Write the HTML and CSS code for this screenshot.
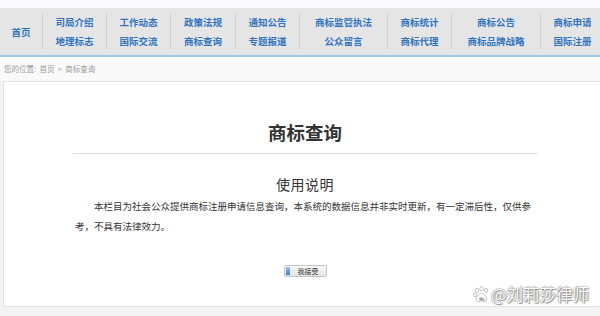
FILE: index.html
```html
<!DOCTYPE html>
<html lang="zh-CN">
<head>
    <meta charset="UTF-8">
    <title>商标查询</title>
    <link rel="stylesheet" href="styles.css">
</head>
<body>
    <div class="top-strip"></div>
    <nav class="nav">
        <div class="nav-col home"><a>首页</a></div>
        <div class="nav-col w64"><a>司局介绍</a><a>地理标志</a></div>
        <div class="nav-col w64"><a>工作动态</a><a>国际交流</a></div>
        <div class="nav-col w65"><a>政策法规</a><a>商标查询</a></div>
        <div class="nav-col w64"><a>通知公告</a><a>专题报道</a></div>
        <div class="nav-col w88"><a>商标监管执法</a><a>公众留言</a></div>
        <div class="nav-col w64"><a>商标统计</a><a>商标代理</a></div>
        <div class="nav-col w89"><a>商标公告</a><a>商标品牌战略</a></div>
        <div class="nav-col w64 last"><a>商标申请</a><a>国际注册</a></div>
    </nav>

    <div class="crumb">您的位置:&nbsp; 首页 &nbsp;&gt;&nbsp; 商标查询</div>

    <div class="main">
        <h1 class="title">商标查询</h1>
        <hr class="rule">
        <h2 class="subtitle">使用说明</h2>
        <p class="notice">本栏目为社会公众提供商标注册申请信息查询，本系统的数据信息并非实时更新，有一定滞后性，仅供参考，不具有法律效力。</p>
        <div class="actions">
            <button class="accept">我接受</button>
        </div>
    </div>

    <!-- watermark over the bottom right corner -->
    <div class="watermark">
        <svg width="17" height="17" viewBox="0 0 17 17">
            <g fill="#fff" stroke="#bbb" stroke-width="0.9">
                <ellipse cx="4" cy="4.5" rx="1.7" ry="2.1"/>
                <ellipse cx="8.5" cy="2.8" rx="1.7" ry="2.1"/>
                <ellipse cx="13" cy="4.5" rx="1.7" ry="2.1"/>
                <ellipse cx="2.3" cy="9" rx="1.6" ry="1.9"/>
                <path d="M8.5 7.2c-2.4 0-5.2 3.6-5.2 6.1 0 1.8 1.6 2.5 2.8 2.3 1-.2 1.6-.6 2.4-.6s1.4.4 2.4.6c1.2.2 2.8-.5 2.8-2.3 0-2.5-2.8-6.1-5.2-6.1z"/>
            </g>
            <text x="8.5" y="14.4" font-size="4.2" text-anchor="middle" fill="#aaa" font-family="Liberation Sans, sans-serif">du</text>
        </svg>
        <span>@刘莉莎律师</span>
    </div>
</body>
</html>
```

FILE: styles.css
```css
body {
    margin: 0;
    width: 600px;
    height: 316px;
    overflow: hidden;
    position: relative;
    background: #f3f3f4;
    font-family: "Noto Sans CJK SC", "Liberation Sans", sans-serif;
    color: #333;
}
.top-strip {
    height: 8px;
    background: #fbfbfd;
}
.nav {
    display: flex;
    height: 47px;
    background: #e5e5e6;
    border-bottom: 2px solid #a3c8e6;
    overflow: hidden;
    white-space: nowrap;
}
.nav-col {
    flex: none;
    display: flex;
    flex-direction: column;
    justify-content: center;
    align-items: center;
    gap: 6px;
    margin: 6px 0;
    border-right: 1px solid #cfcfd1;
    font-size: 9.5px;
    font-weight: 700;
    line-height: 13px;
    color: #2f74c0;
}
.nav-col.last {
    border-right: none;
}
.home { width: 42px; padding-top: 2px; }
.w64 { width: 63px; }
.w65 { width: 64px; }
.w88 { width: 87px; }
.w89 { width: 88px; }

.crumb {
    height: 24px;
    line-height: 24px;
    padding-left: 4px;
    font-size: 7.5px;
    color: #9a9a9a;
    background: #f9f9fa;
}
.main {
    margin-left: 3px;
    width: 602px;
    height: 224px;
    background: #fff;
    border: 1px solid #dde3ea;
    padding-top: 0;
    box-sizing: content-box;
}
.title {
    margin: 39px 0 0;
    text-align: center;
    font-size: 18.5px;
    line-height: 22px;
    font-weight: 700;
    color: #333;
}
.rule {
    width: 464px;
    margin: 10px auto 0;
    border: none;
    border-top: 1px solid #dedede;
}
.subtitle {
    margin: 21px 0 0;
    text-align: center;
    font-size: 14px;
    line-height: 18px;
    font-weight: 400;
    letter-spacing: 0.5px;
    color: #333;
}
.notice {
    width: 462px;
    margin: 3px auto 0;
    padding-left: 2px;
    font-size: 9.5px;
    line-height: 20px;
    text-indent: 2em;
    color: #333;
}
.actions {
    margin-top: 19px;
    text-align: center;
}
.accept {
    position: relative;
    width: 43px;
    height: 12px;
    padding: 0 0 0 6px;
    border: 1px solid #c4c4c4;
    border-radius: 2px;
    background: linear-gradient(#fbfbfb, #e2e2e2);
    font-family: inherit;
    font-size: 7px;
    line-height: 10px;
    color: #333;
}
.accept::before {
    content: "";
    position: absolute;
    left: 1px;
    top: 1px;
    bottom: 1px;
    width: 4px;
    background: linear-gradient(#9cc4ef, #3d7ed0);
}
.watermark {
    position: absolute;
    left: 473px;
    top: 284px;
    display: flex;
    align-items: center;
    gap: 1px;
    font-size: 16.5px;
    line-height: 20px;
    color: #fff;
    text-shadow: 0 0 1px #777, 0 0 2px #888, 1px 1px 1px #999;
}
```
